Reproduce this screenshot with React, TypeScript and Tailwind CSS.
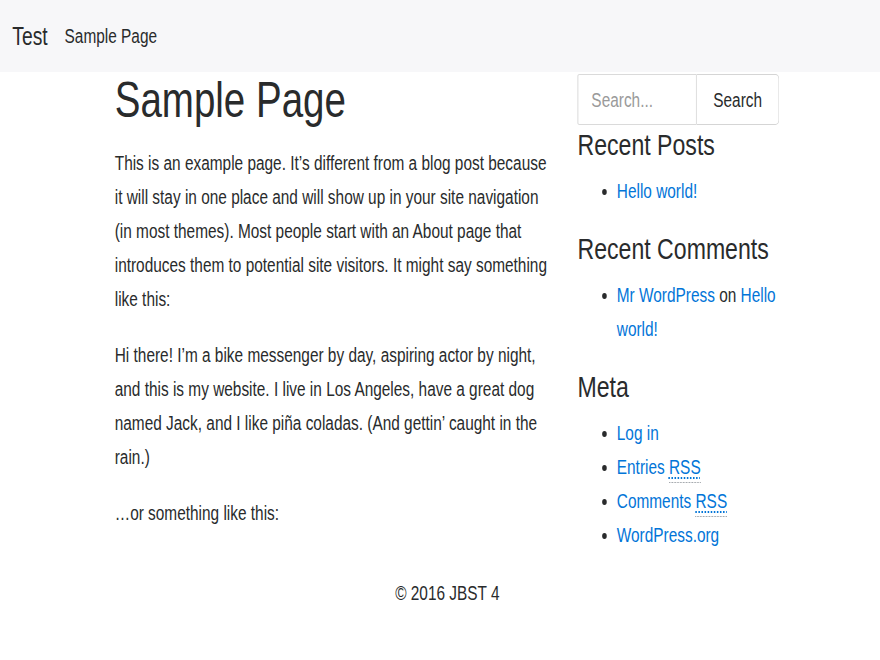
import type { ReactNode } from "react";

const link = "text-[#0275d8]";
const abbr = "underline decoration-dotted underline-offset-[3px] border-b border-dotted border-[#8a9096] pb-[4px]";

function Widget({ title, children }: { title: string; children: ReactNode }) {
  return (
    <section className="mb-[24px]">
      <h4 className="text-[30px] leading-[33px] mb-[13px]">{title}</h4>
      <ul className="list-disc pl-[51px]">{children}</ul>
    </section>
  );
}

export default function App() {
  return (
    <div className="w-full min-h-[660px] overflow-hidden bg-white">
      <div className="w-[1143px] origin-top-left scale-x-[0.77] text-[#292b2c] font-['Liberation_Sans',Arial,sans-serif] text-[20px] leading-[34px]">
        {/* Navbar */}
        <nav className="h-[72px] bg-[#f7f7f9] flex items-center pl-[16px] pb-[1px]">
          <span className="text-[25px] mr-[22px]">Test</span>
          <span className="text-[20px]">Sample Page</span>
        </nav>

        <div className="ml-[134px] w-[902px]">
          <div className="flex">
            {/* Content */}
            <main className="w-[601px] px-[15px]">
              <h1 className="text-[50px] leading-[56px] mb-[18px]">Sample Page</h1>
              <p className="mb-[22px]">
                This is an example page. It’s different from a blog post because it will stay in one place and will show up in your site navigation (in most themes). Most people start with an About page that introduces them to potential site visitors. It might say something like this:
              </p>
              <p className="mb-[22px]">
                Hi there! I’m a bike messenger by day, aspiring actor by night, and this is my website. I live in Los Angeles, have a great dog named Jack, and I like piña coladas. (And gettin’ caught in the rain.)
              </p>
              <p>…or something like this:</p>
            </main>

            {/* Sidebar */}
            <aside className="w-[301px] px-[15px] pt-[2px]">
              <form className="flex h-[51px] text-[20px] mb-[3px]">
                <input
                  placeholder="Search..."
                  className="w-[155px] border border-[#d5d5d5] rounded-l-[2px] pl-[17px] placeholder:text-[#9a9a9a] outline-none"
                />
                <button type="button" className="w-[107px] border border-l-0 border-[#d5d5d5] rounded-r-[5px] bg-white text-center">
                  Search
                </button>
              </form>
              <Widget title="Recent Posts">
                <li><a className={link}>Hello world!</a></li>
              </Widget>
              <Widget title="Recent Comments">
                <li>
                  <a className={link}>Mr WordPress</a> on <a className={link}>Hello world!</a>
                </li>
              </Widget>
              <Widget title="Meta">
                <li><a className={link}>Log in</a></li>
                <li><a className={link}>Entries <abbr title="Really Simple Syndication" className={abbr}>RSS</abbr></a></li>
                <li><a className={link}>Comments <abbr title="Really Simple Syndication" className={abbr}>RSS</abbr></a></li>
                <li><a className={link}>WordPress.org</a></li>
              </Widget>
            </aside>
          </div>

          <footer className="text-center text-[20px] leading-[34px] pr-[8px] pb-[20px]">© 2016 JBST 4</footer>
        </div>
      </div>
    </div>
  );
}
